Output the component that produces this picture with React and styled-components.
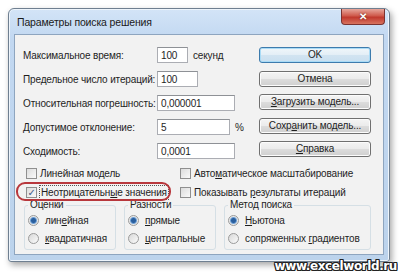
import styled, { createGlobalStyle } from "styled-components";

const Global = createGlobalStyle`
  body {
    margin: 0;
    background: #fff;
    font-family: "Liberation Sans", Arial, sans-serif;
    font-size: 10px;
    letter-spacing: -0.15px;
    color: #1e1e1e;
  }
`;

const fields = [
  { label: "Максимальное время:", value: "100", width: 31, suffix: "секунд" },
  { label: "Предельное число итераций:", value: "100", width: 41 },
  { label: "Относительная погрешность:", value: "0,000001", width: 78 },
  { label: "Допустимое отклонение:", value: "5", width: 73, suffix: "%" },
  { label: "Сходимость:", value: "0,0001", width: 78 },
];

const U = ({ children }) => <u>{children}</u>;

export default function App() {
  return (
    <Page>
      <Global />
      <Window>
        <TitleBar>
          <Title>Параметры поиска решения</Title>
          <CloseButton>✕</CloseButton>
        </TitleBar>
        <Client>
          <Top>
            <Fields>
              {fields.map((f) => (
                <FieldRow key={f.label}>
                  <Label>{f.label}</Label>
                  <Input style={{ width: f.width }}>{f.value}</Input>
                  {f.suffix && <Suffix>{f.suffix}</Suffix>}
                </FieldRow>
              ))}
            </Fields>
            <Buttons>
              <Button $default>OK</Button>
              <Button>Отмена</Button>
              <Button><span><U>З</U>агрузить модель...</span></Button>
              <Button><span>Сохр<U>а</U>нить модель...</span></Button>
              <Button><span><U>С</U>правка</span></Button>
            </Buttons>
          </Top>
          <Checks>
            <CheckRow>
              <Box />
              <span>Линейная модель</span>
            </CheckRow>
            <CheckRow>
              <Box />
              <span>Авто<U>м</U>атическое масштабирование</span>
            </CheckRow>
            <CheckRow $marked>
              <Box $checked>✓</Box>
              <Focus>Неотрицательн<U>ы</U>е значения</Focus>
            </CheckRow>
            <CheckRow>
              <Box />
              <span>Показывать <U>р</U>езультаты итераций</span>
            </CheckRow>
          </Checks>
          <Groups>
            <Group $w={92}>
              <Legend>Оценки</Legend>
              <RadioRow><Radio $on /><span>лин<U>е</U>йная</span></RadioRow>
              <RadioRow><Radio /><span><U>к</U>вадратичная</span></RadioRow>
            </Group>
            <Group $w={92}>
              <Legend>Разности</Legend>
              <RadioRow><Radio $on /><span><U>п</U>рямые</span></RadioRow>
              <RadioRow><Radio /><span><U>ц</U>ентральные</span></RadioRow>
            </Group>
            <Group $w={147}>
              <Legend>Метод поиска</Legend>
              <RadioRow><Radio $on /><span><U>Н</U>ьютона</span></RadioRow>
              <RadioRow><Radio /><span>сопряженных <U>г</U>радиентов</span></RadioRow>
            </Group>
          </Groups>
        </Client>
      </Window>
      <Watermark>www.excelworld.ru</Watermark>
    </Page>
  );
}

const Page = styled.div`
  position: relative;
  width: 400px;
  height: 275px;
  padding: 8px 0 0 8px;
  box-sizing: border-box;
  overflow: hidden;
`;

const Window = styled.div`
  width: 382px;
  height: 254px;
  box-sizing: border-box;
  border: 1px solid #6f7f90;
  border-radius: 6px 6px 3px 3px;
  background: linear-gradient(#d3e4f7, #c2d8f1 30px, #bcd3ec);
  box-shadow: 2px 3px 6px rgba(0, 0, 0, 0.35), inset 0 0 0 1px #eef5fc;
  display: flex;
  flex-direction: column;
`;

const TitleBar = styled.div`
  height: 25px;
  display: flex;
  justify-content: space-between;
  align-items: flex-start;
  padding-left: 8px;
`;

const Title = styled.div`
  margin-top: 7px;
  font-size: 10.5px;
  line-height: 12px;
  color: #1a1a1a;
`;

const CloseButton = styled.div`
  width: 42px;
  height: 15px;
  margin-right: 4px;
  border: 1px solid #7a3330;
  border-top: none;
  border-radius: 0 0 4px 4px;
  background: linear-gradient(#e7a79c, #cf5a4c 45%, #c0392d 55%, #d8735f);
  color: #fff;
  font-size: 10px;
  font-weight: bold;
  display: flex;
  align-items: center;
  justify-content: center;
  text-shadow: 0 0 2px #5a1a14;
`;

const Client = styled.div`
  flex: 1;
  margin: 0 5px 6px 5px;
  border: 1px solid #8ea5bf;
  background: #f2f2f2;
  display: flex;
  flex-direction: column;
`;

const Top = styled.div`
  display: flex;
  justify-content: space-between;
  padding: 12px 12px 0 8px;
`;

const Fields = styled.div`
  display: flex;
  flex-direction: column;
  gap: 8px;
`;

const FieldRow = styled.div`
  display: flex;
  align-items: center;
  height: 16px;
`;

const Label = styled.div`
  width: 134px;
  white-space: nowrap;
`;

const Input = styled.div`
  height: 16px;
  box-sizing: border-box;
  border: 1px solid #abadb3;
  border-top-color: #8e9196;
  background: #fff;
  padding: 1px 0 0 3px;
  line-height: 13px;
`;

const Suffix = styled.span`
  margin-left: 5px;
`;

const Buttons = styled.div`
  display: flex;
  flex-direction: column;
  gap: 7.5px;
  width: 112px;
`;

const Button = styled.div`
  height: 16px;
  box-sizing: border-box;
  border: 1px solid ${(p) => (p.$default ? "#3d7bad" : "#707070")};
  border-radius: 3px;
  background: ${(p) =>
    p.$default
      ? "linear-gradient(#f0f6fa, #e3eef6 50%, #d2e4f1 50%, #c9dff0)"
      : "linear-gradient(#f4f4f4, #ebebeb 50%, #dddddd 50%, #cfcfcf)"};
  box-shadow: ${(p) => (p.$default ? "inset 0 0 0 1px #a9dbf6" : "inset 0 0 0 1px #fcfcfc")};
  display: flex;
  align-items: center;
  justify-content: center;
  line-height: 12px;
`;

const Checks = styled.div`
  display: grid;
  grid-template-columns: 154px 1fr;
  grid-auto-rows: 14px;
  row-gap: 5px;
  padding: 7px 0 0 11px;
`;

const CheckRow = styled.div`
  position: relative;
  display: flex;
  align-items: center;
  white-space: nowrap;
  &::after {
    content: "";
    display: ${(p) => (p.$marked ? "block" : "none")};
    position: absolute;
    left: -10px;
    top: -3px;
    width: 155px;
    height: 19px;
    box-sizing: border-box;
    border: 2px solid #b8373c;
    border-radius: 9px;
  }
`;

const Box = styled.span`
  width: 11px;
  height: 11px;
  box-sizing: border-box;
  border: 1px solid #8f8f8f;
  background: linear-gradient(135deg, #dcdcdc, #fafafa);
  margin-right: 3px;
  font-size: 10px;
  line-height: 9px;
  color: #3f5a8a;
  display: flex;
  justify-content: center;
  font-family: "DejaVu Sans", sans-serif;
`;

const Focus = styled.span`
  outline: 1px dotted #555;
  padding: 0 1px;
  line-height: 13px;
`;

const Groups = styled.div`
  display: flex;
  gap: 8px;
  padding: 0 0 0 9px;
`;

const Group = styled.fieldset`
  width: ${(p) => p.$w}px;
  height: 51px;
  box-sizing: border-box;
  margin: 0;
  padding: 0 3px;
  border: 1px solid #d5dfe5;
  border-radius: 3px;
`;

const Legend = styled.legend`
  padding: 0 2px;
  line-height: 12px;
`;

const RadioRow = styled.div`
  display: flex;
  align-items: center;
  height: 18px;
  white-space: nowrap;
`;

const Radio = styled.span`
  width: 11px;
  height: 11px;
  box-sizing: border-box;
  border-radius: 50%;
  border: 1px solid #9a9a9a;
  background: ${(p) =>
    p.$on
      ? "radial-gradient(circle, #2a5f9e 0 2px, #6fa0d6 3px, #e8e8e8 4px)"
      : "linear-gradient(135deg, #d8d8d8, #fbfbfb)"};
  margin-right: 6px;
`;

const Watermark = styled.div`
  position: absolute;
  right: 3px;
  bottom: 2px;
  font-family: "DejaVu Sans", sans-serif;
  font-weight: bold;
  font-size: 12px;
  letter-spacing: -0.4px;
  color: #fff;
  text-shadow: -1px -1px 0 #222, 1px -1px 0 #222, -1px 1px 0 #222, 1px 1px 0 #222,
    0 1px 0 #222, 0 -1px 0 #222, 1px 0 0 #222, -1px 0 0 #222;
`;
